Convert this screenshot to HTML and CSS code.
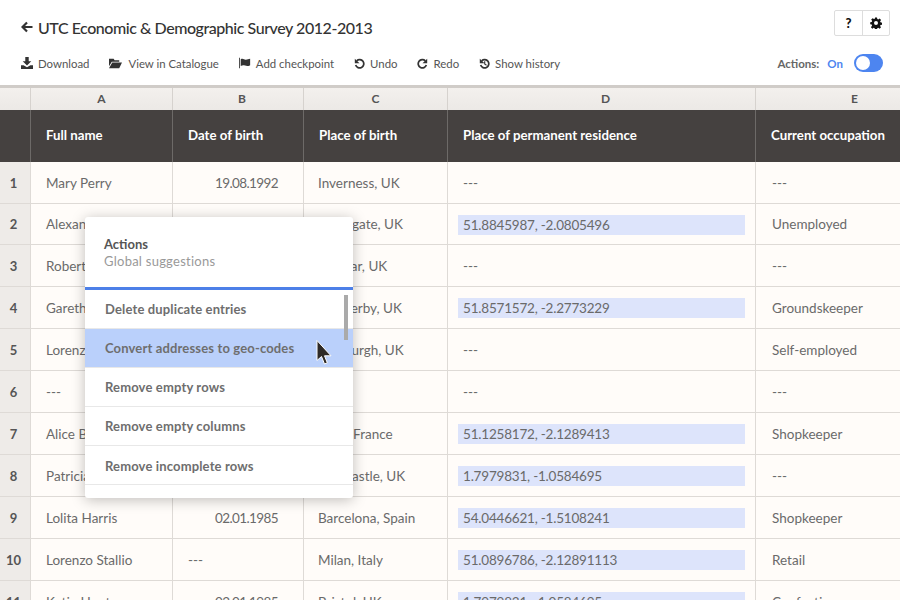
FILE: index.html
```html
<!DOCTYPE html>
<html lang="en">
<head>
    <meta charset="UTF-8">
    <title>UTC Economic &amp; Demographic Survey 2012-2013</title>
    <link rel="stylesheet" href="styles.css">
</head>
<body>

    <header class="topbar">
        <div class="title-row">
            <h1 class="title">
                <svg class="back-icon" viewBox="0 0 12 12"><path d="M6 1.5 1.5 6 6 10.5M2 6h9.5" fill="none" stroke="#333" stroke-width="2.2"/></svg>
                UTC Economic &amp; Demographic Survey 2012-2013
            </h1>
            <div class="btn-group">
                <span class="btn-box help">?</span>
                <span class="btn-box">
                    <svg class="gear" viewBox="0 0 24 24"><path fill-rule="evenodd" d="M10 1h4l.6 3.200 2 .8 2.700-1.800 2.800 2.800-1.900 2.700.9 2 3 .6v4l-3.100.6-.8 2 1.800 2.700-2.800 2.800-2.700-1.900-2 .9-.5 3.100h-4l-.6-3.100-2-.9-2.700 1.900-2.800-2.800L4.200 17l-.8-2-3-.6v-4l3-.6.9-2-1.900-2.700 2.800-2.800L8 4l2-.8zM12 8a4 4 0 1 0 0 8 4 4 0 0 0 0-8z"/></svg>
                </span>
            </div>
        </div>
        <div class="tool-row">
            <nav class="tools">
                <a class="tool"><svg viewBox="0 0 14 14"><path d="M5 0h4v5h3L7 10 2 5h3zM0 9.500h3L7 12l4-2.500h3V14H0z"/></svg>Download</a>
                <a class="tool tool-wide"><svg viewBox="0 0 14 14"><path d="M0 2h5l1 1.500h5V5H3L0 10zM3.500 6H14l-3 6H0z"/></svg>View in Catalogue</a>
                <a class="tool"><svg viewBox="0 0 14 14"><path d="M0 1h1v12H0zM2 2.500c3-1.500 4 1 6 .7 2-.2 3-.7 5-1.200v7.500c-3 1.500-4 1-6 .5-2-.4-3-.4-5 .5z"/></svg>Add checkpoint</a>
                <a class="tool tool-small"><svg viewBox="0 0 14 14"><path class="ring" d="M3.400 3.600A5.300 5.300 0 1 1 2.100 9"/><path d="M1 .8v6h6z"/></svg>Undo</a>
                <a class="tool tool-small"><svg viewBox="0 0 14 14"><path class="ring" d="M10.600 3.600A5.300 5.300 0 1 0 11.900 9"/><path d="M13 .8v6H7z"/></svg>Redo</a>
                <a class="tool tool-small"><svg viewBox="0 0 14 14"><path class="ring" d="M3.400 3.600A5.300 5.300 0 1 1 2.100 9"/><path d="M1 .8v6h6zM6.500 4H8v3.300l2 1.300-.8 1.200-2.700-1.800z"/></svg>Show history</a>
            </nav>
            <div class="actions-toggle">
                <span class="toggle-label">Actions:</span>
                <span class="toggle-state">On</span>
                <span class="toggle"><span class="toggle-thumb"></span></span>
            </div>
        </div>
    </header>

    <table class="sheet">
        <colgroup>
            <col class="col-gutter">
            <col class="col-a">
            <col class="col-b">
            <col class="col-c">
            <col class="col-d">
            <col class="col-e">
        </colgroup>
        <tr class="letters">
            <th></th><th>A</th><th class="shifted">B</th><th>C</th><th class="shifted">D</th><th class="last-letter">E</th>
        </tr>
        <tr class="names">
            <th></th>
            <th>Full name</th>
            <th>Date of birth</th>
            <th>Place of birth</th>
            <th>Place of permanent residence</th>
            <th>Current occupation</th>
        </tr>
        <tr>
            <td class="num">1</td><td>Mary Perry</td><td class="date">19.08.1992</td><td>Inverness, UK</td><td>---</td><td>---</td>
        </tr>
        <tr class="short">
            <td class="num">2</td><td>Alexander Reid</td><td class="date">04.11.1979</td><td>Harrogate, UK</td><td><span class="geo">51.8845987, -2.0805496</span></td><td>Unemployed</td>
        </tr>
        <tr>
            <td class="num">3</td><td>Robert Lewis</td><td class="date">23.06.1968</td><td>Dunbar, UK</td><td>---</td><td>---</td>
        </tr>
        <tr>
            <td class="num">4</td><td>Gareth Jones</td><td class="date">11.03.1990</td><td>Wetherby, UK</td><td><span class="geo">51.8571572, -2.2773229</span></td><td>Groundskeeper</td>
        </tr>
        <tr>
            <td class="num">5</td><td>Lorenzo Conti</td><td class="date">30.09.1983</td><td>Edinburgh, UK</td><td>---</td><td>Self-employed</td>
        </tr>
        <tr>
            <td class="num">6</td><td>---</td><td>---</td><td>---</td><td>---</td><td>---</td>
        </tr>
        <tr>
            <td class="num">7</td><td>Alice Bernard</td><td class="date">17.05.1975</td><td>Paris, France</td><td><span class="geo">51.1258172, -2.1289413</span></td><td>Shopkeeper</td>
        </tr>
        <tr>
            <td class="num">8</td><td>Patricia Hall</td><td class="date">08.12.1988</td><td>Newcastle, UK</td><td><span class="geo">1.7979831, -1.0584695</span></td><td>---</td>
        </tr>
        <tr>
            <td class="num">9</td><td>Lolita Harris</td><td class="date">02.01.1985</td><td>Barcelona, Spain</td><td><span class="geo">54.0446621, -1.5108241</span></td><td>Shopkeeper</td>
        </tr>
        <tr>
            <td class="num">10</td><td>Lorenzo Stallio</td><td>---</td><td>Milan, Italy</td><td><span class="geo">51.0896786, -2.12891113</span></td><td>Retail</td>
        </tr>
        <tr>
            <td class="num">11</td><td>Katie Hunt</td><td class="date">02.01.1985</td><td>Bristol, UK</td><td><span class="geo">1.7979831, -1.0584695</span></td><td>Confectioner</td>
        </tr>
    </table>

    <div class="popup">
        <div class="popup-head">
            <div class="popup-title">Actions</div>
            <div class="popup-sub">Global suggestions</div>
        </div>
        <ul class="popup-list">
            <li>Delete duplicate entries</li>
            <li class="active">Convert addresses to geo-codes</li>
            <li>Remove empty rows</li>
            <li>Remove empty columns</li>
            <li>Remove incomplete rows</li>
        </ul>
        <div class="popup-scroll"></div>
    </div>

    <svg class="cursor" viewBox="0 0 16 25"><path d="M1 .5V20.500l4.500-4 3 7.500 2.800-1.200-2.800-7H15z" fill="#2e2a27" stroke="#fff" stroke-width="1"/></svg>

</body>
</html>
```

FILE: styles.css
```css
html, body {
    margin: 0;
    height: 600px;
    overflow: hidden;
}

body {
    position: relative;
    font-family: Lato, "Open Sans", sans-serif;
    background-color: #fffcf9;
    color: #666;
}

/* top bar */
.topbar {
    height: 85px;
    background-color: #fff;
    border-bottom: 3px solid #d0ccc8;
    position: relative;
    z-index: 2;
}

.title-row {
    display: flex;
    justify-content: space-between;
    height: 46px;
    padding: 10px 10px 0 21px;
    box-sizing: border-box;
}

.title {
    display: flex;
    align-items: center;
    height: 34px;
    margin: 0;
    font-size: 16px;
    font-weight: 500;
    letter-spacing: -0.45px;
    color: #333;
}

.back-icon {
    width: 12px;
    height: 12px;
    margin-right: 5px;
}

.btn-group {
    display: flex;
    height: 26px;
    border: 1px solid #ddd;
    border-radius: 2px;
    box-sizing: border-box;
}

.btn-box {
    display: flex;
    align-items: center;
    justify-content: center;
    width: 27px;
    box-sizing: border-box;
}

.btn-box + .btn-box {
    border-left: 1px solid #ddd;
}

.help {
    font-weight: 900;
    font-size: 13px;
    color: #111;
}

.gear {
    width: 12px;
    height: 12px;
    fill: #111;
}

.tool-row {
    display: flex;
    justify-content: space-between;
    align-items: center;
    height: 34px;
    padding: 0 17px 0 21px;
}

.tools {
    display: flex;
    gap: 20px;
}

.tool {
    display: flex;
    align-items: center;
    gap: 5px;
    font-size: 11.4px;
    color: #555;
}

.tool svg {
    width: 12px;
    height: 12px;
    fill: #333;
}

.tool .ring {
    fill: none;
    stroke: #333;
    stroke-width: 2.2;
}

.tool-wide {
    gap: 6px;
}

.tool-wide svg {
    width: 13px;
    height: 13px;
}

.tool-small svg {
    width: 11px;
    height: 11px;
}

.actions-toggle {
    display: flex;
    align-items: center;
    font-size: 11.5px;
    font-weight: 700;
}

.toggle-label {
    color: #666;
    margin-right: 8px;
}

.toggle-state {
    color: #4d85f0;
    margin-right: 11px;
}

.toggle {
    display: flex;
    align-items: center;
    width: 29px;
    height: 18px;
    padding: 2px;
    box-sizing: border-box;
    background-color: #4d85f0;
    border-radius: 9px;
}

.toggle-thumb {
    width: 14px;
    height: 14px;
    background-color: #fff;
    border-radius: 50%;
}

/* spreadsheet */
.sheet {
    width: 900px;
    table-layout: fixed;
    border-collapse: separate;
    border-spacing: 0;
    font-size: 13.5px;
}

.col-gutter { width: 30px; }
.col-a { width: 142px; }
.col-b { width: 131px; }
.col-c { width: 144px; }
.col-d { width: 308px; }
.col-e { width: 145px; }

.sheet th, .sheet td {
    box-sizing: border-box;
    padding: 0;
    white-space: nowrap;
    overflow: hidden;
}

.sheet th:first-child, .sheet td:first-child {
    background-color: #eeebe8;
}

.letters th {
    height: 22px;
    padding-bottom: 2px;
    background-image: linear-gradient(#f3f0ed, #ece9e6);
    border-left: 1px solid #d6d2ce;
    font-size: 12px;
    font-weight: 700;
    color: #555;
}

.letters th:first-child {
    border-left: 0;
}

.letters .shifted {
    padding-left: 8px;
}

.letters .last-letter {
    padding-left: 53px;
}

.names th {
    height: 52px;
    background-color: #454140;
    border-left: 1px solid #6d6a68;
    padding: 0 0 2px 15px;
    text-align: left;
    font-size: 13.25px;
    font-weight: 700;
    color: #fff;
}

.sheet .names th:first-child {
    background-color: #454140;
    border-left: 0;
    padding-left: 0;
}

.sheet td {
    height: 42px;
    padding-left: 15px;
    border-left: 1px solid #dedad6;
    border-bottom: 1px solid #dedad6;
    color: #6a6a6a;
}

.sheet td:nth-child(4) {
    padding-left: 14px;
}

.sheet td:nth-child(6) {
    padding-left: 16px;
}

.short td {
    height: 41px;
}

.sheet .num {
    padding: 0 3px 0 0;
    border-left: 0;
    text-align: center;
    font-size: 13px;
    font-weight: 700;
    color: #555;
}

.sheet .date {
    padding: 0 25px 0 0;
    text-align: right;
    letter-spacing: -0.6px;
}

.geo {
    display: block;
    height: 20px;
    width: 287px;
    margin: 1px 0 0 -5px;
    padding-left: 5px;
    box-sizing: border-box;
    line-height: 20px;
    letter-spacing: -0.2px;
    background-color: #dde4fb;
}

/* actions popup */
.popup {
    position: absolute;
    left: 85px;
    top: 217px;
    width: 268px;
    height: 281px;
    background-color: #fff;
    border-radius: 3px;
    box-shadow: 0 2px 14px rgba(0, 0, 0, 0.25);
    z-index: 3;
    font-size: 13px;
}

.popup-head {
    height: 73px;
    padding: 19px 0 0 19px;
    box-sizing: border-box;
    border-bottom: 3px solid #4d80e8;
}

.popup-title {
    font-weight: 700;
    color: #555;
    line-height: 16px;
}

.popup-sub {
    color: #999;
    line-height: 18px;
    letter-spacing: 0.25px;
}

.popup-list {
    list-style: none;
    margin: 0;
    padding: 0;
}

.popup-list li {
    height: 39px;
    box-sizing: border-box;
    padding-left: 20px;
    line-height: 38px;
    border-bottom: 1px solid #e8e8e8;
    font-weight: 700;
    letter-spacing: 0.15px;
    color: #6e6e6e;
}

.popup-list li:last-child {
    padding-top: 2px;
    line-height: 36px;
}

.popup-list .active {
    background-color: #bad0fb;
}

.popup-scroll {
    position: absolute;
    left: 259px;
    top: 78px;
    width: 4px;
    height: 45px;
    background-color: #aaa;
}

.cursor {
    position: absolute;
    left: 316px;
    top: 340px;
    width: 16px;
    height: 25px;
    z-index: 4;
}
```
